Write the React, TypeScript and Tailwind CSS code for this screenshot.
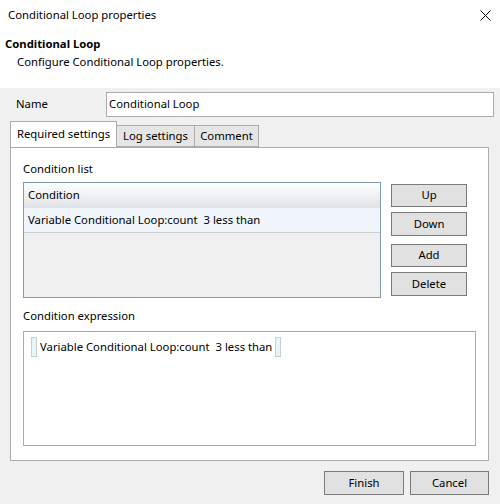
import React from "react";

const font = { fontFamily: '"Noto Sans", "Open Sans", sans-serif' };

function Btn({ label, className = "" }: { label: string; className?: string }) {
  return (
    <button
      className={`flex items-center justify-center border border-[#7a7a7a] bg-[#e1e1e1] text-[11.3px] text-black ${className}`}
    >
      {label}
    </button>
  );
}

function Bracket() {
  return <span className="inline-block h-[20px] w-[6px] border border-[#c8cfd4] bg-[#e6f6f8]" />;
}

export default function App() {
  return (
    <div className="flex h-[504px] w-[500px] flex-col bg-white text-[11.3px] text-black" style={font}>
      {/* dialog header */}
      <div className="flex h-[88px] flex-col bg-white">
        <div className="flex h-[30px] items-center justify-between pl-[8px] pr-[9px]">
          <span className="leading-none">Conditional Loop properties</span>
          <svg width="11" height="11" viewBox="0 0 11 11" className="text-black">
            <path d="M0.5 0.5 L10.5 10.5 M10.5 0.5 L0.5 10.5" stroke="currentColor" strokeWidth="1" />
          </svg>
        </div>
        <div className="mt-[5px] pl-[5px] font-bold leading-[18px]">Conditional Loop</div>
        <div className="pl-[17px] leading-[18px]">Configure Conditional Loop properties.</div>
      </div>

      {/* dialog body */}
      <div className="flex flex-1 flex-col bg-[#f0f0f0] pl-[10px] pr-[6px] pt-[4px]">
        <div className="flex h-[25px] items-center">
          <span className="w-[96px] pl-[6px]">Name</span>
          <div className="flex h-[25px] flex-1 items-center border border-[#acacac] bg-white pl-[2px]">
            Conditional Loop
          </div>
        </div>

        {/* tabs */}
        <div className="mt-[5px] flex h-[25px] items-end">
          <div className="relative z-10 flex h-[26px] w-[107px] items-start justify-center border border-b-0 border-[#acacac] bg-white pt-[4px]">
            Required settings
          </div>
          <div className="flex h-[22px] w-[78px] items-center justify-center border border-l-0 border-[#acacac] bg-[#e5e5e5]">
            Log settings
          </div>
          <div className="flex h-[22px] w-[64px] items-center justify-center border border-l-0 border-[#acacac] bg-[#e5e5e5]">
            Comment
          </div>
        </div>

        <div className="flex h-[314px] w-[479px] flex-col border border-[#acacac] bg-white pl-[12px] pr-[12px]">
          <div className="mt-[12px] leading-[18px]">Condition list</div>
          <div className="mt-[4px] flex">
            <div className="flex h-[116px] w-[358px] flex-col border border-[#7c9bbd] bg-[#f0f0f0]">
              <div className="flex h-[25px] items-center bg-gradient-to-b from-[#ffffff] to-[#dfe2e7] pl-[4px]">
                Condition
              </div>
              <div className="flex h-[25px] items-center border-b border-[#c9cfd6] bg-[#eff5fb] pl-[4px]">
                Variable Conditional Loop:count&nbsp; 3 less than
              </div>
            </div>
            <div className="ml-[10px] mt-[2px] flex flex-col">
              <Btn label="Up" className="h-[23px] w-[76px]" />
              <Btn label="Down" className="mt-[5px] h-[24px] w-[76px]" />
              <Btn label="Add" className="mt-[8px] h-[23px] w-[76px]" />
              <Btn label="Delete" className="mt-[5px] h-[24px] w-[76px]" />
            </div>
          </div>

          <div className="mt-[9px] leading-[18px]">Condition expression</div>
          <div className="mt-[6px] h-[115px] w-[453px] border border-[#acacac] bg-white pl-[7px] pt-[5px]">
            <div className="flex items-center gap-[2px]">
              <Bracket />
              <span className="px-[1px]">Variable Conditional Loop:count&nbsp; 3 less than</span>
              <Bracket />
            </div>
          </div>
        </div>

        <div className="mt-[10px] flex justify-end gap-[6px] pr-[5px]">
          <Btn label="Finish" className="h-[24px] w-[80px]" />
          <Btn label="Cancel" className="h-[24px] w-[79px]" />
        </div>
      </div>
    </div>
  );
}
